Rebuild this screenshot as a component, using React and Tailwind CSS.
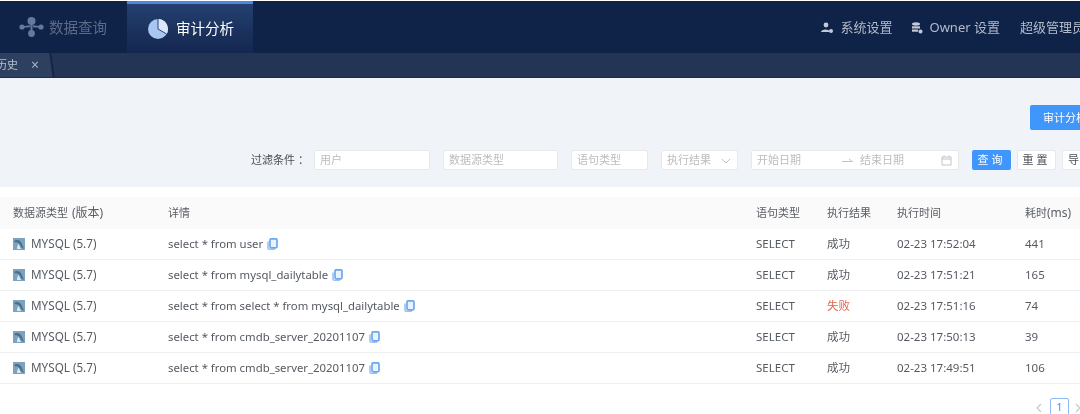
const rows = [
  ["select * from user", "成功", "02-23 17:52:04", "441"],
  ["select * from mysql_dailytable", "成功", "02-23 17:51:21", "165"],
  ["select * from select * from mysql_dailytable", "失败", "02-23 17:51:16", "74"],
  ["select * from cmdb_server_20201107", "成功", "02-23 17:50:13", "39"],
  ["select * from cmdb_server_20201107", "成功", "02-23 17:49:51", "106"],
];

function MysqlIcon() {
  return (
    <svg width="12" height="12" viewBox="0 0 12 12" className="shrink-0">
      <rect width="12" height="12" fill="#7ba3bf" />
      <path d="M1 3 C4 1 7 2 8.5 5 C9.5 7 10 9 11 11 C9 10 8 9 7 7 C6 5 4 4 2.5 4.5 Z" fill="#4a6f8a" />
      <path d="M4 11 C4 8 5 6.5 6 6 C6.5 8 7 9.5 8 11 Z" fill="#dfe9f0" />
    </svg>
  );
}

function CopyIcon() {
  return (
    <svg width="11" height="12" viewBox="0 0 11 12" className="ml-[4px] shrink-0">
      <path d="M1 3.5 V10 Q1 11.2 2.2 11.2 H8" fill="none" stroke="#9cc1f2" strokeWidth="1.6" />
      <rect x="3" y="0.8" width="7" height="9" rx="1.2" fill="#eaf2fd" stroke="#6ea6ee" strokeWidth="1.7" />
    </svg>
  );
}

function Box({ w, children, className = "" }) {
  return (
    <div className={`h-[20px] shrink-0 bg-white border border-[#e6e8ec] rounded-[2px] flex items-center pt-px text-[#bdbdbd] ${w} ${className}`}>
      {children}
    </div>
  );
}

function Header() {
  return (
    <div className="h-[52px] mt-px bg-[#0f2248] flex shrink-0">
      <div className="w-[127px] flex items-center pl-[19px] text-[#5d6b88] text-[14.5px]">
        <svg width="25" height="20" viewBox="0 0 25 20" className="mr-[5px]">
          <g fill="#66789b">
            <circle cx="12.5" cy="4" r="4" />
            <circle cx="3" cy="10" r="2.6" />
            <circle cx="22" cy="10" r="2.6" />
            <circle cx="12.5" cy="16.5" r="3.4" />
            <path d="M11.5 6h2v8h-2zM3 9.2l8-1v2l-8 .6zM22 9.2l-8-1v2l8 .6z" />
          </g>
        </svg>
        <span className="pt-[1px]">数据查询</span>
      </div>
      <div className="w-[126px] border-t-[3px] border-[#4f86e0] bg-gradient-to-b from-[#24406f] to-[#14274f] flex items-center pl-[21px] text-white text-[14.5px]">
        <svg width="20" height="20" viewBox="0 0 20 20" className="mr-[8px]">
          <circle cx="10" cy="10" r="10" fill="#a9c6f2" />
          <path d="M10 10 V0 A10 10 0 0 1 18.6 15 Z" fill="#dce8fa" />
          <path d="M10 0 V10 L18.6 15" fill="none" stroke="#2a4677" strokeWidth="1" />
        </svg>
        审计分析
      </div>
      <div className="flex-1 flex items-center justify-end pt-[2px] text-[#b3bbca] text-[13px] whitespace-nowrap -mr-[5px]">
        <svg width="12" height="12" viewBox="0 0 12 12" className="mr-[7px]">
          <circle cx="5" cy="3" r="2.4" fill="#c3cad6" />
          <path d="M0 10 C0 6.5 9 6.5 9 10 Z" fill="#c3cad6" />
          <circle cx="10" cy="9" r="2" fill="#c3cad6" />
        </svg>
        <span>系统设置</span>
        <svg width="12" height="12" viewBox="0 0 12 12" className="ml-[19px] mr-[6px]">
          <ellipse cx="5" cy="2" rx="4" ry="1.7" fill="#c3cad6" />
          <rect x="1" y="4.3" width="8" height="2.2" fill="#c3cad6" />
          <rect x="1" y="7.5" width="6" height="2.2" fill="#c3cad6" />
          <circle cx="9.5" cy="9.5" r="2" fill="#c3cad6" />
        </svg>
        <span>Owner 设置</span>
        <span className="ml-[20px]">超级管理员</span>
      </div>
    </div>
  );
}

function Tabs() {
  return (
    <div className="h-[25px] bg-[#233455] flex shrink-0 border-b border-[#1c2c4a] overflow-hidden">
      <div className="w-[56px] bg-[#2e4060] border-r-[2px] border-[#16233e] flex items-center pt-px text-[#b9c1ce] text-[11px] skew-x-[8deg] -ml-[3px]">
        <div className="-skew-x-[8deg] flex items-center whitespace-nowrap -ml-[1px]">
          <span>历史</span>
          <span className="ml-[13px] text-[#aab3c2] text-[14px] leading-none">×</span>
        </div>
      </div>
    </div>
  );
}

function Filters() {
  return (
    <div className="h-[109px] bg-[#f0f3f8] shrink-0 flex flex-col overflow-hidden">
      <div className="flex justify-start pl-[1030px] pt-[27px] whitespace-nowrap">
        <div className="h-[25px] w-[70px] shrink-0 bg-[#4096fa] rounded-[2px] text-white text-[11px] flex items-center pt-px pl-[13px]">审计分析</div>
      </div>
      <div className="flex items-center pl-[251px] mt-[20px] text-[11px] whitespace-nowrap w-[1200px]">
        <span className="w-[63px] shrink-0 pt-px text-[#4b4f56]">过滤条件<span className="ml-[3px]">：</span></span>
        <Box w="w-[116px]" className="pl-[5px]">用户</Box>
        <Box w="w-[115px]" className="ml-[13px] pl-[5px]">数据源类型</Box>
        <Box w="w-[77px]" className="ml-[13px] pl-[5px]">语句类型</Box>
        <Box w="w-[77px]" className="ml-[13px] pl-[5px] justify-between pr-[6px]">
          执行结果
          <svg width="10" height="6" viewBox="0 0 10 6"><path d="M1 1 L5 5 L9 1" fill="none" stroke="#c4c4c4" strokeWidth="1" /></svg>
        </Box>
        <Box w="w-[208px]" className="ml-[13px] pl-[5px] pr-[6px]">
          <span className="w-[85px]">开始日期</span>
          <svg width="12" height="6" viewBox="0 0 12 6" className="mr-[6px]"><path d="M0 3.5 H11 M7 1 L10 3.5" fill="none" stroke="#c4c4c4" strokeWidth="1" /></svg>
          <span className="flex-1">结束日期</span>
          <svg width="11" height="11" viewBox="0 0 11 11"><path d="M1 2 H10 V10 H1 Z M1 4 H10 M3 0.5 V2 M8 0.5 V2" fill="none" stroke="#c4c4c4" strokeWidth="1" /></svg>
        </Box>
        <div className="ml-[13px] w-[39px] h-[20px] shrink-0 bg-[#4096fa] rounded-[2px] text-white flex items-center justify-center pt-px tracking-[3px]">查询</div>
        <div className="ml-[6px] w-[39px] h-[20px] shrink-0 bg-white border border-[#e6e8ec] rounded-[2px] text-[#4b4f56] flex items-center justify-center pt-px tracking-[3px]">重置</div>
        <div className="ml-[6px] w-[39px] h-[20px] shrink-0 bg-white border border-[#e6e8ec] rounded-[2px] text-[#4b4f56] flex items-center pt-px pl-[5px]">导出</div>
      </div>
    </div>
  );
}

const grid = "grid grid-cols-[13px_155px_588px_71px_70px_128px_55px] items-center";

function Table() {
  return (
    <div className="bg-white pt-[10px] flex-1 text-[11.5px] text-[#555a61] whitespace-nowrap">
      <div className={`${grid} h-[32px] bg-[#fafafa] text-[#5a5e65] text-[11px]`}>
        <span />
        <span>数据源类型 <span className="text-[12px] ml-[1px]">(版本)</span></span>
        <span>详情</span>
        <span>语句类型</span>
        <span>执行结果</span>
        <span>执行时间</span>
        <span>耗时<span className="text-[12px]">(ms)</span></span>
      </div>
      {rows.map((r, i) => (
        <div key={i} className={`${grid} h-[31px] border-b border-[#eeeff1]`}>
          <span />
          <span className="flex items-center gap-[6px] text-[11.7px]"><MysqlIcon />MYSQL (5.7)</span>
          <span className="flex items-center text-[11.35px]">{r[0]}<CopyIcon /></span>
          <span>SELECT</span>
          <span className={r[1] === "失败" ? "text-[#e0654f]" : ""}>{r[1]}</span>
          <span>{r[2]}</span>
          <span>{r[3]}</span>
        </div>
      ))}
      <div className="flex items-center pl-[1035px] pt-[14px] w-[1200px]">
        <svg width="8" height="10" viewBox="0 0 8 10"><path d="M6 1 L2 5 L6 9" fill="none" stroke="#c8c8c8" strokeWidth="1.2" /></svg>
        <div className="ml-[7px] w-[19px] h-[19px] border border-[#8fbcf5] rounded-[2px] text-[#4096fa] flex items-center justify-center text-[11px]">1</div>
        <svg width="8" height="10" viewBox="0 0 8 10" className="ml-[5px]"><path d="M2 1 L6 5 L2 9" fill="none" stroke="#c8c8c8" strokeWidth="1.2" /></svg>
      </div>
    </div>
  );
}

export default function App() {
  return (
    <div className="w-[1080px] h-[414px] overflow-hidden flex flex-col bg-white font-['Noto_Sans','Noto_Sans_CJK_SC',sans-serif] blur-[0.3px]">
      <Header />
      <Tabs />
      <Filters />
      <Table />
    </div>
  );
}
